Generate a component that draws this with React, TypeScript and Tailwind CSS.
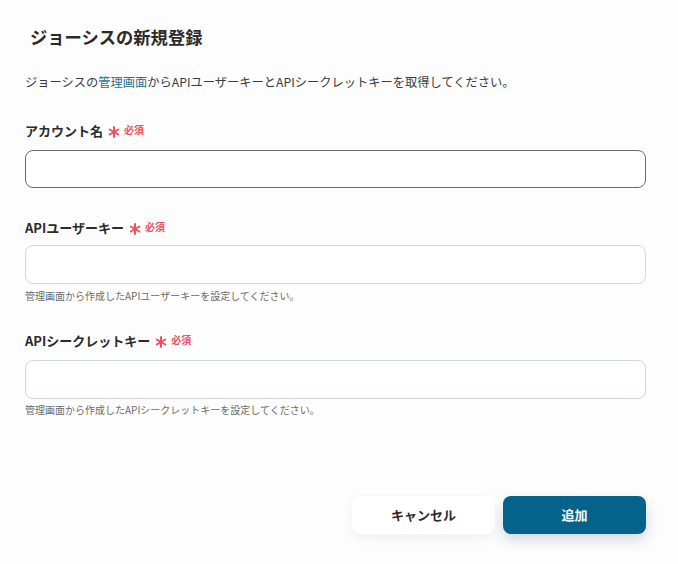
import React from "react";

const font = { fontFamily: '"Noto Sans CJK JP", "Noto Sans", sans-serif' };

function Label({ text }: { text: string }) {
  return (
    <div className="flex items-center gap-[5px]">
      <span className="text-[13px] font-bold text-[#2b2b2b] leading-[18px]">{text}</span>
      <span className="flex items-center gap-[4px] text-[#f0505a]">
        <svg width="12" height="12" viewBox="0 0 12 12" className="mt-[2px]">
          <g stroke="#f0505a" strokeWidth="2" strokeLinecap="round">
            <line x1="6" y1="1" x2="6" y2="11" />
            <line x1="1.7" y1="3.5" x2="10.3" y2="8.5" />
            <line x1="1.7" y1="8.5" x2="10.3" y2="3.5" />
          </g>
        </svg>
        <span className="text-[10px] font-bold -mt-[3px]">必須</span>
      </span>
    </div>
  );
}

export default function App() {
  return (
    <div style={font} className="w-[678px] h-[564px] bg-[#fdfdfe] relative overflow-hidden">
      <div className="px-[25px] pt-[25px]">
        <h1 className="pl-[5px] text-[17.3px] font-bold text-[#2b2b2b] leading-[24px]">ジョーシスの新規登録</h1>
        <p className="mt-[24px] text-[12.25px] text-[#3a3a3a] leading-[18px]">
          ジョーシスの<span className="text-[#1f6f8f]">管理画面</span>からAPIユーザーキーとAPIシークレットキーを取得してください。
        </p>
        <div className="mt-[31px]">
          <Label text="アカウント名" />
          <div className="mt-[10px] h-[38px] w-[621px] rounded-[8px] border border-[#6b6b6b] bg-white" />
        </div>
        <div className="mt-[31px]">
          <Label text="APIユーザーキー" />
          <div className="mt-[8px] h-[39px] w-[621px] rounded-[8px] border border-[#d2d6de] bg-white" />
          <p className="mt-[5px] text-[10px] text-[#6b6b6b] leading-[14px]">管理画面から作成したAPIユーザーキーを設定してください。</p>
        </div>
        <div className="mt-[29px]">
          <Label text="APIシークレットキー" />
          <div className="mt-[10px] h-[39px] w-[621px] rounded-[8px] border border-[#d2d6de] bg-white" />
          <p className="mt-[4px] text-[10px] text-[#6b6b6b] leading-[14px]">管理画面から作成したAPIシークレットキーを設定してください。</p>
        </div>
      </div>
      <div className="absolute left-[352px] top-[496px] flex gap-[8px]">
        <button className="h-[38px] w-[143px] rounded-[8px] bg-white text-[13px] font-bold text-[#2b2b2b] shadow-[0_4px_12px_rgba(0,0,0,0.06)]">キャンセル</button>
        <button className="h-[38px] w-[143px] rounded-[8px] bg-[#05628a] text-[13px] font-bold text-white shadow-[0_6px_14px_rgba(5,50,80,0.18)]">追加</button>
      </div>
    </div>
  );
}
